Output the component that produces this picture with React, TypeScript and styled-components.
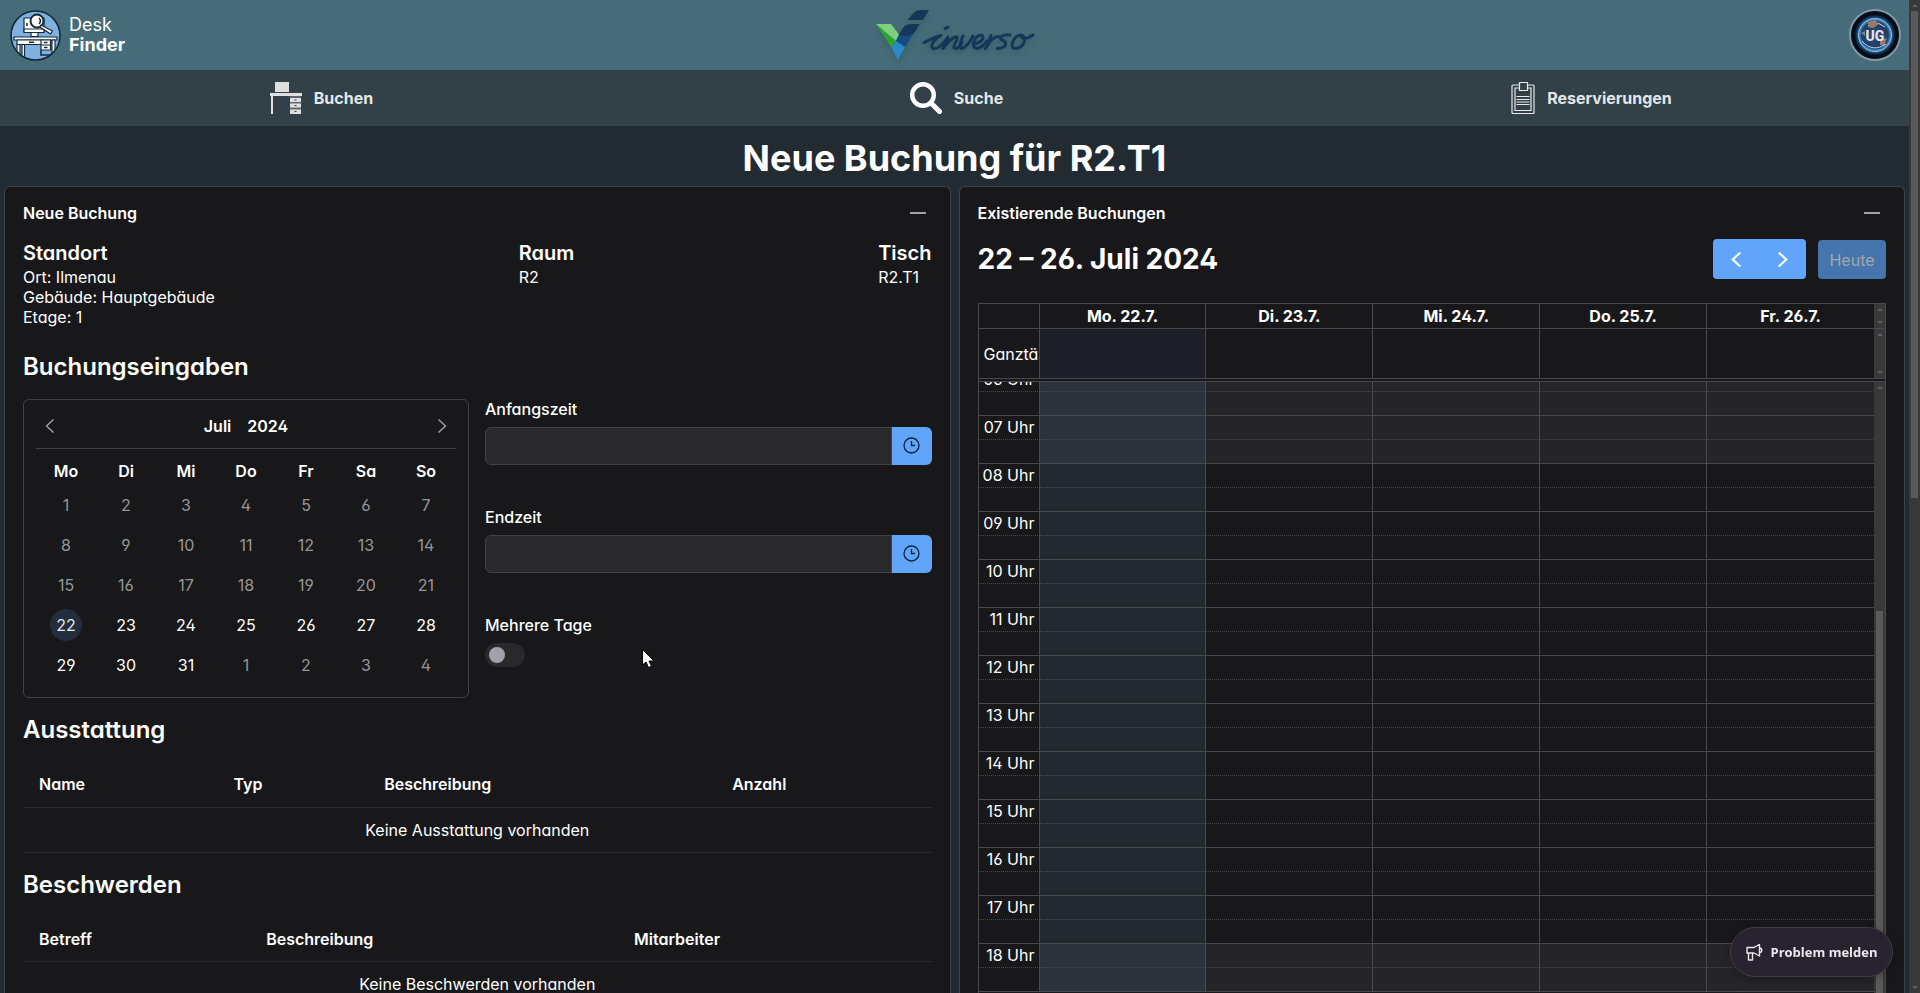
import React from "react";
import styled, { createGlobalStyle, css } from "styled-components";

const GlobalStyle = createGlobalStyle`
  * { box-sizing: border-box; }
  html, body { margin: 0; height: 100%; background: #222a32; overflow: hidden; }
  #root { height: 100%; }
  body, button, input {
    font-family: Inter, "Liberation Sans", sans-serif;
    font-size: 16px;
    font-feature-settings: "cv02", "cv03", "cv04", "cv11";
  }
  body { color: #fff; line-height: 20px; }
  h1, h2, h3, h4, p { margin: 0; }
  button { cursor: pointer; }
`;

const line = "#424244";
const gridLine = "#49494b";
const surface = "#18181a";

const Viewport = styled.div`
  display: flex;
  height: 100vh;
  overflow: hidden;
`;

const Page = styled.div`
  flex: 1;
  min-width: 0;
  display: flex;
  flex-direction: column;
`;

const TopBar = styled.header`
  display: grid;
  grid-template-columns: 1fr auto 1fr;
  align-items: center;
  flex: none;
  height: 70px;
  padding: 0 8px 0 10px;
  background: #456c78;
`;

const Brand = styled.a`
  display: flex;
  align-items: center;
  gap: 8px;
  justify-self: start;
  color: #fff;
  text-decoration: none;
  font-size: 18px;
`;

const BrandName = styled.span`
  display: flex;
  flex-direction: column;
`;

const CompanyLogo = styled.svg`
  filter: drop-shadow(0 3px 3px rgba(40, 80, 75, 0.4));
`;

const AvatarButton = styled.button`
  justify-self: end;
  display: block;
  width: 52px;
  height: 52px;
  padding: 0;
  border: 0;
  border-radius: 50%;
  background: none;
`;

const Nav = styled.nav`
  display: grid;
  grid-template-columns: repeat(3, 1fr);
  flex: none;
  height: 56px;
  padding-left: 4px;
  background: #314147;
`;

const NavLink = styled.a`
  display: flex;
  align-items: center;
  justify-content: center;
  gap: 12px;
  color: #e4e6e7;
  font-weight: 700;
  text-decoration: none;
`;

const PageTitle = styled.h1`
  flex: none;
  padding: 13px 0 9px;
  font-size: 36px;
  line-height: 38px;
  text-align: center;
`;

const Panels = styled.main`
  flex: 1;
  min-height: 0;
  display: grid;
  grid-template-columns: 1fr 1fr;
  gap: 8px;
  padding: 0 4px;
`;

const Panel = styled.section`
  min-width: 0;
  min-height: 0;
  overflow: hidden;
  display: flex;
  flex-direction: column;
  padding: 0 18px;
  border: 1px solid ${line};
  border-bottom: 0;
  border-radius: 6px 6px 0 0;
  background: ${surface};
`;

const PanelHeader = styled.div`
  display: flex;
  flex: none;
  align-items: center;
  justify-content: space-between;
  height: 52px;
  h2 { font-size: 16px; font-weight: 600; }
`;

const IconButton = styled.button`
  display: grid;
  place-items: center;
  width: 28px;
  height: 28px;
  padding: 0;
  border: 0;
  background: none;
  color: #a1a1aa;
`;

const Place = styled.div`
  display: flex;
  flex: none;
  justify-content: space-between;
  padding: 2px 0 26px;
  h3 { font-size: 20px; line-height: 24px; font-weight: 600; margin-bottom: 2px; }
`;

const SectionTitle = styled.h3`
  flex: none;
  font-size: 24px;
  line-height: 28px;
  font-weight: 600;
`;

const Inputs = styled.div`
  display: grid;
  grid-template-columns: 446px 1fr;
  align-items: start;
  flex: none;
  gap: 16px;
  padding: 18px 0;
`;

const DatePicker = styled.div`
  padding: 12px;
  border: 1px solid ${line};
  border-radius: 6px;
`;

const MonthBar = styled.div`
  display: flex;
  align-items: center;
  justify-content: space-between;
  height: 37px;
  padding-bottom: 8px;
  border-bottom: 1px solid ${line};
  font-weight: 600;
`;

const MonthName = styled.div`
  display: flex;
  gap: 16px;
`;

const Days = styled.table`
  width: 100%;
  table-layout: fixed;
  margin-top: 8px;
  border-collapse: collapse;
  th { height: 28px; padding: 0; font-weight: 600; }
  td { height: 40px; padding: 0; text-align: center; }
`;

const DayButton = styled.button<{ $muted?: boolean; $today?: boolean }>`
  width: 32px;
  height: 32px;
  padding: 0;
  border: 0;
  border-radius: 50%;
  background: ${(p) => (p.$today ? "#222d3d" : "none")};
  color: ${(p) => (p.$muted ? "#969697" : p.$today ? "#e8e8ea" : "#fff")};
`;

const Fields = styled.div`
  display: flex;
  flex-direction: column;
`;

const Field = styled.div`
  &:not(:last-child) { height: 108px; }
  label { display: block; height: 28px; font-weight: 500; }
`;

const InputGroup = styled.div`
  display: flex;
  height: 38px;
  input {
    flex: 1;
    min-width: 0;
    border: 1px solid ${line};
    border-radius: 6px 0 0 6px;
    background: #29292b;
    color: #fff;
    padding: 0 12px;
  }
  button {
    display: grid;
    place-items: center;
    width: 40px;
    padding: 0;
    border: 0;
    border-radius: 0 6px 6px 0;
    background: #60a5fa;
    color: #10213a;
  }
`;

const Switch = styled.input`
  appearance: none;
  display: flex;
  align-items: center;
  width: 40px;
  height: 24px;
  margin: 0;
  padding: 0 4px;
  border-radius: 12px;
  background: #29292b;
  &::before {
    content: "";
    width: 16px;
    height: 16px;
    border-radius: 50%;
    background: #a1a1aa;
  }
  &:checked { justify-content: flex-end; background: #60a5fa; }
`;

const DataTable = styled.table`
  flex: none;
  width: 100%;
  table-layout: fixed;
  border-collapse: collapse;
  margin: 18px 0;
  th, td { height: 45px; padding: 0 16px; border-bottom: 1px solid #29292b; }
  th { text-align: left; font-weight: 600; }
  td { text-align: center; }
`;

const CalendarBar = styled.div`
  display: flex;
  flex: none;
  align-items: center;
  justify-content: space-between;
  height: 40px;
  margin-bottom: 24px;
  h2 { font-size: 28px; line-height: 34px; font-weight: 700; }
`;

const BarActions = styled.div`
  display: flex;
  align-items: flex-end;
  gap: 12px;
`;

const PagerGroup = styled.div`
  display: flex;
  width: 93px;
  height: 40px;
  border-radius: 4px;
  background: #60a5fa;
  button {
    flex: 1;
    display: grid;
    place-items: center;
    padding: 0;
    border: 0;
    background: none;
    color: #fff;
  }
`;

const TodayButton = styled.button`
  width: 68px;
  height: 39px;
  padding: 0;
  border: 0;
  border-radius: 4px;
  background: #4674ad;
  color: #a3a7ac;
`;

const Calendar = styled.div`
  flex: 1;
  min-height: 0;
  display: flex;
  flex-direction: column;
  border: 1px solid ${gridLine};
  border-bottom: 0;
`;

const HeadBand = styled.div<{ $gap?: boolean }>`
  display: flex;
  flex: none;
  border-bottom: 1px solid ${gridLine};
  margin-bottom: ${(p) => (p.$gap ? 2 : 0)}px;
`;

const SlotBand = styled.div`
  display: flex;
  flex: 1;
  min-height: 0;
  overflow: hidden;
  border-top: 1px solid ${gridLine};
`;

const columns = css`
  flex: 1;
  min-width: 0;
  width: 100%;
  table-layout: fixed;
  border-collapse: separate;
  border-spacing: 0;
`;

const AxisCol = styled.col`
  width: 61px;
`;

const HeadTable = styled.table<{ $height: number }>`
  ${columns}
  height: ${(p) => p.$height}px;
  th, td { padding: 0; border-right: 1px solid ${gridLine}; }
  th { font-weight: 700; }
  th:last-child, td:last-child { border-right: 0; }
  th[scope="row"] {
    padding-left: 5px;
    overflow: hidden;
    font-weight: 400;
    text-align: left;
    white-space: nowrap;
  }
`;

const Scroller = styled.div`
  flex: 1;
  min-width: 0;
  display: flex;
  flex-direction: column;
  overflow: hidden;
`;

const SlotTable = styled.table`
  ${columns}
  flex: none;
  margin-top: -14px;
  td, th {
    height: 24px;
    padding: 0;
    border-right: 1px solid ${gridLine};
    border-bottom: 1px solid ${gridLine};
  }
  th {
    padding: 0 4px 2px 0;
    font-weight: 400;
    line-height: 20px;
    text-align: right;
  }
  td:last-child { border-right: 0; }
`;

const SlotRow = styled.tr<{ $half?: boolean; $closed?: boolean }>`
  td { background: ${(p) => (p.$closed ? "#252527" : "transparent")}; }
  td:nth-child(2) { background: ${(p) => (p.$closed ? "#2c333d" : "#212830")}; }
  ${(p) => !p.$half && css`&& td, && th { border-bottom-style: dotted; }`}
`;

const AllDayCell = styled.td<{ $today?: boolean }>`
  background: ${(p) => (p.$today ? "#1d1f28" : "transparent")};
`;

const Track = styled.div`
  flex: none;
  display: flex;
  flex-direction: column;
  align-items: center;
  justify-content: space-between;
  width: 11px;
  background: #393939;
`;

const Arrow = styled.span<{ $down?: boolean }>`
  width: 0;
  height: 0;
  margin: 4px 0;
  border: 3px solid transparent;
  border-top-width: ${(p) => (p.$down ? 3 : 0)}px;
  border-bottom-width: ${(p) => (p.$down ? 0 : 3)}px;
  ${(p) => (p.$down ? "border-top-color" : "border-bottom-color")}: #606060;
`;

const CalendarThumb = styled.div`
  width: 7px;
  height: 62.5%;
  margin-top: auto;
  background: #5a5a5a;
`;

const PageThumb = styled.div`
  width: 7px;
  height: 49%;
  margin-bottom: auto;
  background: #5a5a5a;
`;

const ReportButton = styled.button`
  position: fixed;
  right: 27px;
  bottom: 16px;
  display: flex;
  align-items: center;
  justify-content: center;
  gap: 8px;
  width: 163px;
  height: 50px;
  padding: 0;
  border: 1px solid #433b46;
  border-radius: 25px;
  background: #29232f;
  color: #ebe6ef;
  font-family: "Open Sans", "Noto Sans", sans-serif;
  font-size: 13px;
  font-weight: 700;
  font-feature-settings: normal;
  box-shadow: 0 2px 8px rgba(0, 0, 0, 0.25);
`;

const Pointer = styled.svg`
  position: fixed;
  left: 642px;
  top: 649px;
`;

const DeskLogo = () => (
  <svg width="51" height="51" viewBox="0 0 51 51" aria-hidden="true">
    <defs>
      <clipPath id="disc"><circle cx="25.500" cy="25.500" r="24" /></clipPath>
    </defs>
    <circle cx="25.500" cy="25.500" r="24.500" fill="#7eb1de" />
    <g clipPath="url(#disc)">
      <g stroke="#14293a" strokeWidth="1.200" fill="#fff" strokeLinejoin="round">
        <path d="M14 8h20v14H14z" />
        <path d="M14 19h20v3.500H14zM21 22.500h7v4h-7z" />
        <path d="M4 27h43v3H4z" />
        <path d="M7 30h25v4.500H7zM7 34.500h3V50H7zM12 34.500h2.500V50H12z" />
        <path d="M31 30h9.500v5H31zM31 35h9.500v5H31zM42 30h3v20h-3z" />
        <circle cx="27" cy="11" r="6.500" strokeWidth="2" />
        <path d="M31 15l11.500 6-2 3-10.500-7z" />
      </g>
      <path d="M19 32.200h5M34 32.500h3.500M34 37.500h3.500M17 13v3M29 8a4 4 0 0 1 0 6M31 40v5h11" stroke="#14293a" strokeWidth="1.500" fill="none" />
    </g>
    <circle cx="25.500" cy="25.500" r="24.500" fill="none" stroke="#14293a" strokeWidth="1.600" />
  </svg>
);

const InversoLogo = () => (
  <CompanyLogo width="166" height="62" viewBox="1 0 166 62" role="img" aria-label="inverso">
    <path d="M4 20l20 17-4.500 6.500z" fill="#2ea336" />
    <path d="M4 20h15l8 10.500-3 6.500z" fill="#7fd07a" />
    <path d="M27 30.500L47.500 20 33 43l-9-6z" fill="#164b80" />
    <path d="M24 37l9 6-7.200 13-6.300-12.500z" fill="#2a8ac5" />
    <path d="M27 31c4-8 6-11 13-11h7.500C43 29 41 32 32 32z" fill="#16365a" />
    <path d="M36 16c5-7 7-10 14-10h7l-6 10z" fill="#16365a" />
    <g fill="none" stroke="#16365a" strokeWidth="3" strokeLinecap="round" strokeLinejoin="round">
      <path d="M52 38.500C57 36 64 33 69 31.500C64 34 57 41 61 44.500C66 46 71 40 76 33L71 44.500C76 38 81 32 85 33C87 35 79 43 83 44.500C86 45 88 42 90 38" />
      <path d="M91 32C88 38 87 45 90 44.500C94 43 98 38 101 32" />
      <path d="M102 40C109 39 114 33 109 31C102 32 98 44 105 44.500C109 44 112 41 115 37" />
      <path d="M119 31.500L113.500 44.500C117 38 122 32 127 32.500" />
      <path d="M138 31C130 30 126 34 130 36C136 38 135 44 125 44.500" />
      <path d="M149 31C141 32 137 44 143 44.500C152 44 156 33 149 31C149 36 155 35 161 31" />
      <path d="M73 24.500l3-1.200" />
    </g>
  </CompanyLogo>
);

const Avatar = () => (
  <svg width="52" height="52" viewBox="0 0 52 52" aria-hidden="true">
    <defs>
      <radialGradient id="glow">
        <stop offset="70%" stopColor="#3b8fd6" />
        <stop offset="100%" stopColor="#060c1a" />
      </radialGradient>
      <radialGradient id="globe">
        <stop offset="0%" stopColor="#31466b" />
        <stop offset="80%" stopColor="#203d68" />
        <stop offset="100%" stopColor="#5aa8e0" />
      </radialGradient>
    </defs>
    <circle cx="26" cy="26" r="25" fill="#060c1a" stroke="#8298a5" strokeWidth="2" />
    <circle cx="26" cy="26" r="20.500" fill="url(#glow)" />
    <circle cx="26" cy="26" r="16.500" fill="url(#globe)" stroke="#7cc3ec" strokeWidth="1" />
    <path d="M19 13l7-2 4 4-6 4-5-1zM31 31l7-2-3 8-4-1zM12 24l4-2v5z" fill="#9c7a68" />
    <path d="M13 32c7 8 15 9 24 3M29 14l7 4" stroke="#b9d5e6" strokeWidth="1" fill="none" />
    <text x="26" y="32" textAnchor="middle" fontSize="14" fontWeight="800" fontFamily="Roboto, sans-serif" fill="#e2e4ea">UG</text>
  </svg>
);

const DeskIcon = () => (
  <svg width="32" height="32" viewBox="0 0 32 32" fill="#dedfdf" aria-hidden="true">
    <path d="M5 0h14v10H5zM0 11h32v3H0zM1 14h2v18H1zM20 16h11v4H20zM20 21.500h11v4H20zM20 27.500h11V32H20z" />
    <path d="M20 14h11v18H20z" fillOpacity=".25" />
    <path d="M24.500 17.500h2v1h-2zM24.500 23h2v1h-2zM24.500 29h2v1h-2z" fill="#314147" />
  </svg>
);

const SearchIcon = () => (
  <svg width="32" height="32" viewBox="0 0 32 32" fill="none" stroke="#fff" aria-hidden="true">
    <circle cx="13" cy="13" r="10.800" strokeWidth="4.400" />
    <path d="M21.500 21.500l8 8" strokeWidth="5" strokeLinecap="round" />
  </svg>
);

const ClipboardIcon = () => (
  <svg width="24" height="32" viewBox="0 0 24 32" fill="none" stroke="#e8eaea" aria-hidden="true">
    <rect x="1" y="3" width="22" height="28.500" rx="1" strokeWidth="1.200" />
    <path d="M8 6H4v22.500h16V6h-4" strokeWidth="1.200" />
    <path d="M8.500 8.500v-8h8v8z" fill="#314147" strokeWidth="1.200" />
    <path d="M5.500 14.500h13M5.500 17.500h13M5.500 20h13M5.500 22.500h13" />
  </svg>
);

const Chevron = ({ right, size = 14, weight = 2 }: { right?: boolean; size?: number; weight?: number }) => (
  <svg width={size} height={size} viewBox="0 0 14 14" fill="none" stroke="currentColor" strokeWidth={weight} aria-hidden="true">
    <path d={right ? "M3.500 0.500L10.500 7L3.500 13.500" : "M10.500 0.500L3.500 7L10.500 13.500"} />
  </svg>
);

const ClockIcon = () => (
  <svg width="18" height="18" viewBox="0 0 18 18" fill="none" stroke="currentColor" aria-hidden="true">
    <circle cx="8.500" cy="8.500" r="7.500" strokeWidth="1.300" />
    <path d="M8.500 4v4.500h3.500" strokeWidth="1.300" />
  </svg>
);

const MegaphoneIcon = () => (
  <svg width="17" height="17" viewBox="0 0 17 17" fill="none" stroke="currentColor" strokeWidth="1.400" strokeLinejoin="round" aria-hidden="true">
    <path d="M1 3.500h7l5.500-3v11.500L8 9H1zM2.500 9v7h4V9M13.500 4c3 0 3 4.500 0 4.500" />
  </svg>
);

const Minus = () => (
  <svg width="16" height="2" viewBox="0 0 16 2" aria-hidden="true">
    <path d="M0 1h16" stroke="currentColor" strokeWidth="2" />
  </svg>
);

const weekdays = ["Mo", "Di", "Mi", "Do", "Fr", "Sa", "So"];
const weeks = [0, 7, 14, 21, 28].map((start) => weekdays.map((_, i) => start + i + 1));
const calendarDays = ["Mo. 22.7.", "Di. 23.7.", "Mi. 24.7.", "Do. 25.7.", "Fr. 26.7."];
const hours = Array.from({ length: 13 }, (_, i) => i + 6);

const CalendarColumns = () => (
  <colgroup>
    <AxisCol />
    {calendarDays.map((d) => <col key={d} />)}
  </colgroup>
);

const TimeField = ({ id, label }: { id: string; label: string }) => (
  <Field>
    <label htmlFor={id}>{label}</label>
    <InputGroup>
      <input id={id} type="text" />
      <button type="button" aria-label={`${label} wählen`}><ClockIcon /></button>
    </InputGroup>
  </Field>
);

const EmptyTable = ({ heads, message }: { heads: [string, string][]; message: string }) => (
  <DataTable>
    <colgroup>{heads.map(([name, width]) => <col key={name} style={{ width }} />)}</colgroup>
    <thead><tr>{heads.map(([name]) => <th key={name} scope="col">{name}</th>)}</tr></thead>
    <tbody><tr><td colSpan={heads.length}>{message}</td></tr></tbody>
  </DataTable>
);

export default function App() {
  return (
    <Viewport>
      <GlobalStyle />
      <Page>
        <TopBar>
          <Brand href="#">
            <DeskLogo />
            <BrandName><span>Desk</span><b>Finder</b></BrandName>
          </Brand>
          <InversoLogo />
          <AvatarButton type="button" aria-label="Profil"><Avatar /></AvatarButton>
        </TopBar>
        <Nav>
          <NavLink href="#buchen"><DeskIcon />Buchen</NavLink>
          <NavLink href="#suche"><SearchIcon />Suche</NavLink>
          <NavLink href="#reservierungen"><ClipboardIcon />Reservierungen</NavLink>
        </Nav>
        <PageTitle>Neue Buchung für R2.T1</PageTitle>
        <Panels>
          <Panel>
            <PanelHeader>
              <h2>Neue Buchung</h2>
              <IconButton type="button" aria-label="Einklappen"><Minus /></IconButton>
            </PanelHeader>
            <Place>
              <div><h3>Standort</h3><p>Ort: Ilmenau</p><p>Gebäude: Hauptgebäude</p><p>Etage: 1</p></div>
              <div><h3>Raum</h3><p>R2</p></div>
              <div><h3>Tisch</h3><p>R2.T1</p></div>
            </Place>
            <SectionTitle>Buchungseingaben</SectionTitle>
            <Inputs>
              <DatePicker>
                <MonthBar>
                  <IconButton type="button" aria-label="Vorheriger Monat"><Chevron weight={1.4} /></IconButton>
                  <MonthName><span>Juli</span><span>2024</span></MonthName>
                  <IconButton type="button" aria-label="Nächster Monat"><Chevron right weight={1.4} /></IconButton>
                </MonthBar>
                <Days>
                  <thead><tr>{weekdays.map((d) => <th key={d} scope="col">{d}</th>)}</tr></thead>
                  <tbody>
                    {weeks.map((week) => (
                      <tr key={week[0]}>
                        {week.map((n) => (
                          <td key={n}>
                            <DayButton type="button" $muted={n < 22 || n > 31} $today={n === 22}>{n > 31 ? n - 31 : n}</DayButton>
                          </td>
                        ))}
                      </tr>
                    ))}
                  </tbody>
                </Days>
              </DatePicker>
              <Fields>
                <TimeField id="start" label="Anfangszeit" />
                <TimeField id="end" label="Endzeit" />
                <Field>
                  <label htmlFor="multi">Mehrere Tage</label>
                  <Switch id="multi" type="checkbox" role="switch" />
                </Field>
              </Fields>
            </Inputs>
            <SectionTitle>Ausstattung</SectionTitle>
            <EmptyTable heads={[["Name", "21.4%"], ["Typ", "16.6%"], ["Beschreibung", "38.3%"], ["Anzahl", "23.7%"]]} message="Keine Ausstattung vorhanden" />
            <SectionTitle>Beschwerden</SectionTitle>
            <EmptyTable heads={[["Betreff", "25%"], ["Beschreibung", "40.5%"], ["Mitarbeiter", "34.5%"]]} message="Keine Beschwerden vorhanden" />
          </Panel>
          <Panel>
            <PanelHeader>
              <h2>Existierende Buchungen</h2>
              <IconButton type="button" aria-label="Einklappen"><Minus /></IconButton>
            </PanelHeader>
            <CalendarBar>
              <h2>22 – 26. Juli 2024</h2>
              <BarActions>
                <PagerGroup>
                  <button type="button" aria-label="Vorherige Woche"><Chevron size={15} /></button>
                  <button type="button" aria-label="Nächste Woche"><Chevron right size={15} /></button>
                </PagerGroup>
                <TodayButton type="button" disabled>Heute</TodayButton>
              </BarActions>
            </CalendarBar>
            <Calendar>
              <HeadBand>
                <HeadTable $height={24}>
                  <CalendarColumns />
                  <thead><tr><td />{calendarDays.map((d) => <th key={d} scope="col">{d}</th>)}</tr></thead>
                </HeadTable>
                <Track><Arrow /><Arrow $down /></Track>
              </HeadBand>
              <HeadBand $gap>
                <HeadTable $height={49}>
                  <CalendarColumns />
                  <tbody><tr><th scope="row">Ganztä</th>{calendarDays.map((d, i) => <AllDayCell key={d} $today={i === 0} />)}</tr></tbody>
                </HeadTable>
                <Track><Arrow /><Arrow $down /></Track>
              </HeadBand>
              <SlotBand>
                <Scroller>
                  <SlotTable>
                    <CalendarColumns />
                    <tbody>
                      {hours.map((h) => {
                        const closed = h < 8 || h > 17;
                        return (
                          <React.Fragment key={h}>
                            <SlotRow $closed={closed}>
                              <th scope="row">{String(h).padStart(2, "0")} Uhr</th>
                              {calendarDays.map((d) => <td key={d} />)}
                            </SlotRow>
                            <SlotRow $half $closed={closed}>
                              <th />
                              {calendarDays.map((d) => <td key={d} />)}
                            </SlotRow>
                          </React.Fragment>
                        );
                      })}
                    </tbody>
                  </SlotTable>
                </Scroller>
                <Track><Arrow /><CalendarThumb /></Track>
              </SlotBand>
            </Calendar>
          </Panel>
        </Panels>
      </Page>
      <Track><Arrow /><PageThumb /><Arrow $down /></Track>
      <ReportButton type="button"><MegaphoneIcon />Problem melden</ReportButton>
      <Pointer width="13" height="19" viewBox="0 0 13 19" aria-hidden="true">
        <path d="M0.500 0.500V16L4 13l2.500 5.500 3-1.300L7 12h5z" fill="#fff" stroke="#000" />
      </Pointer>
    </Viewport>
  );
}
